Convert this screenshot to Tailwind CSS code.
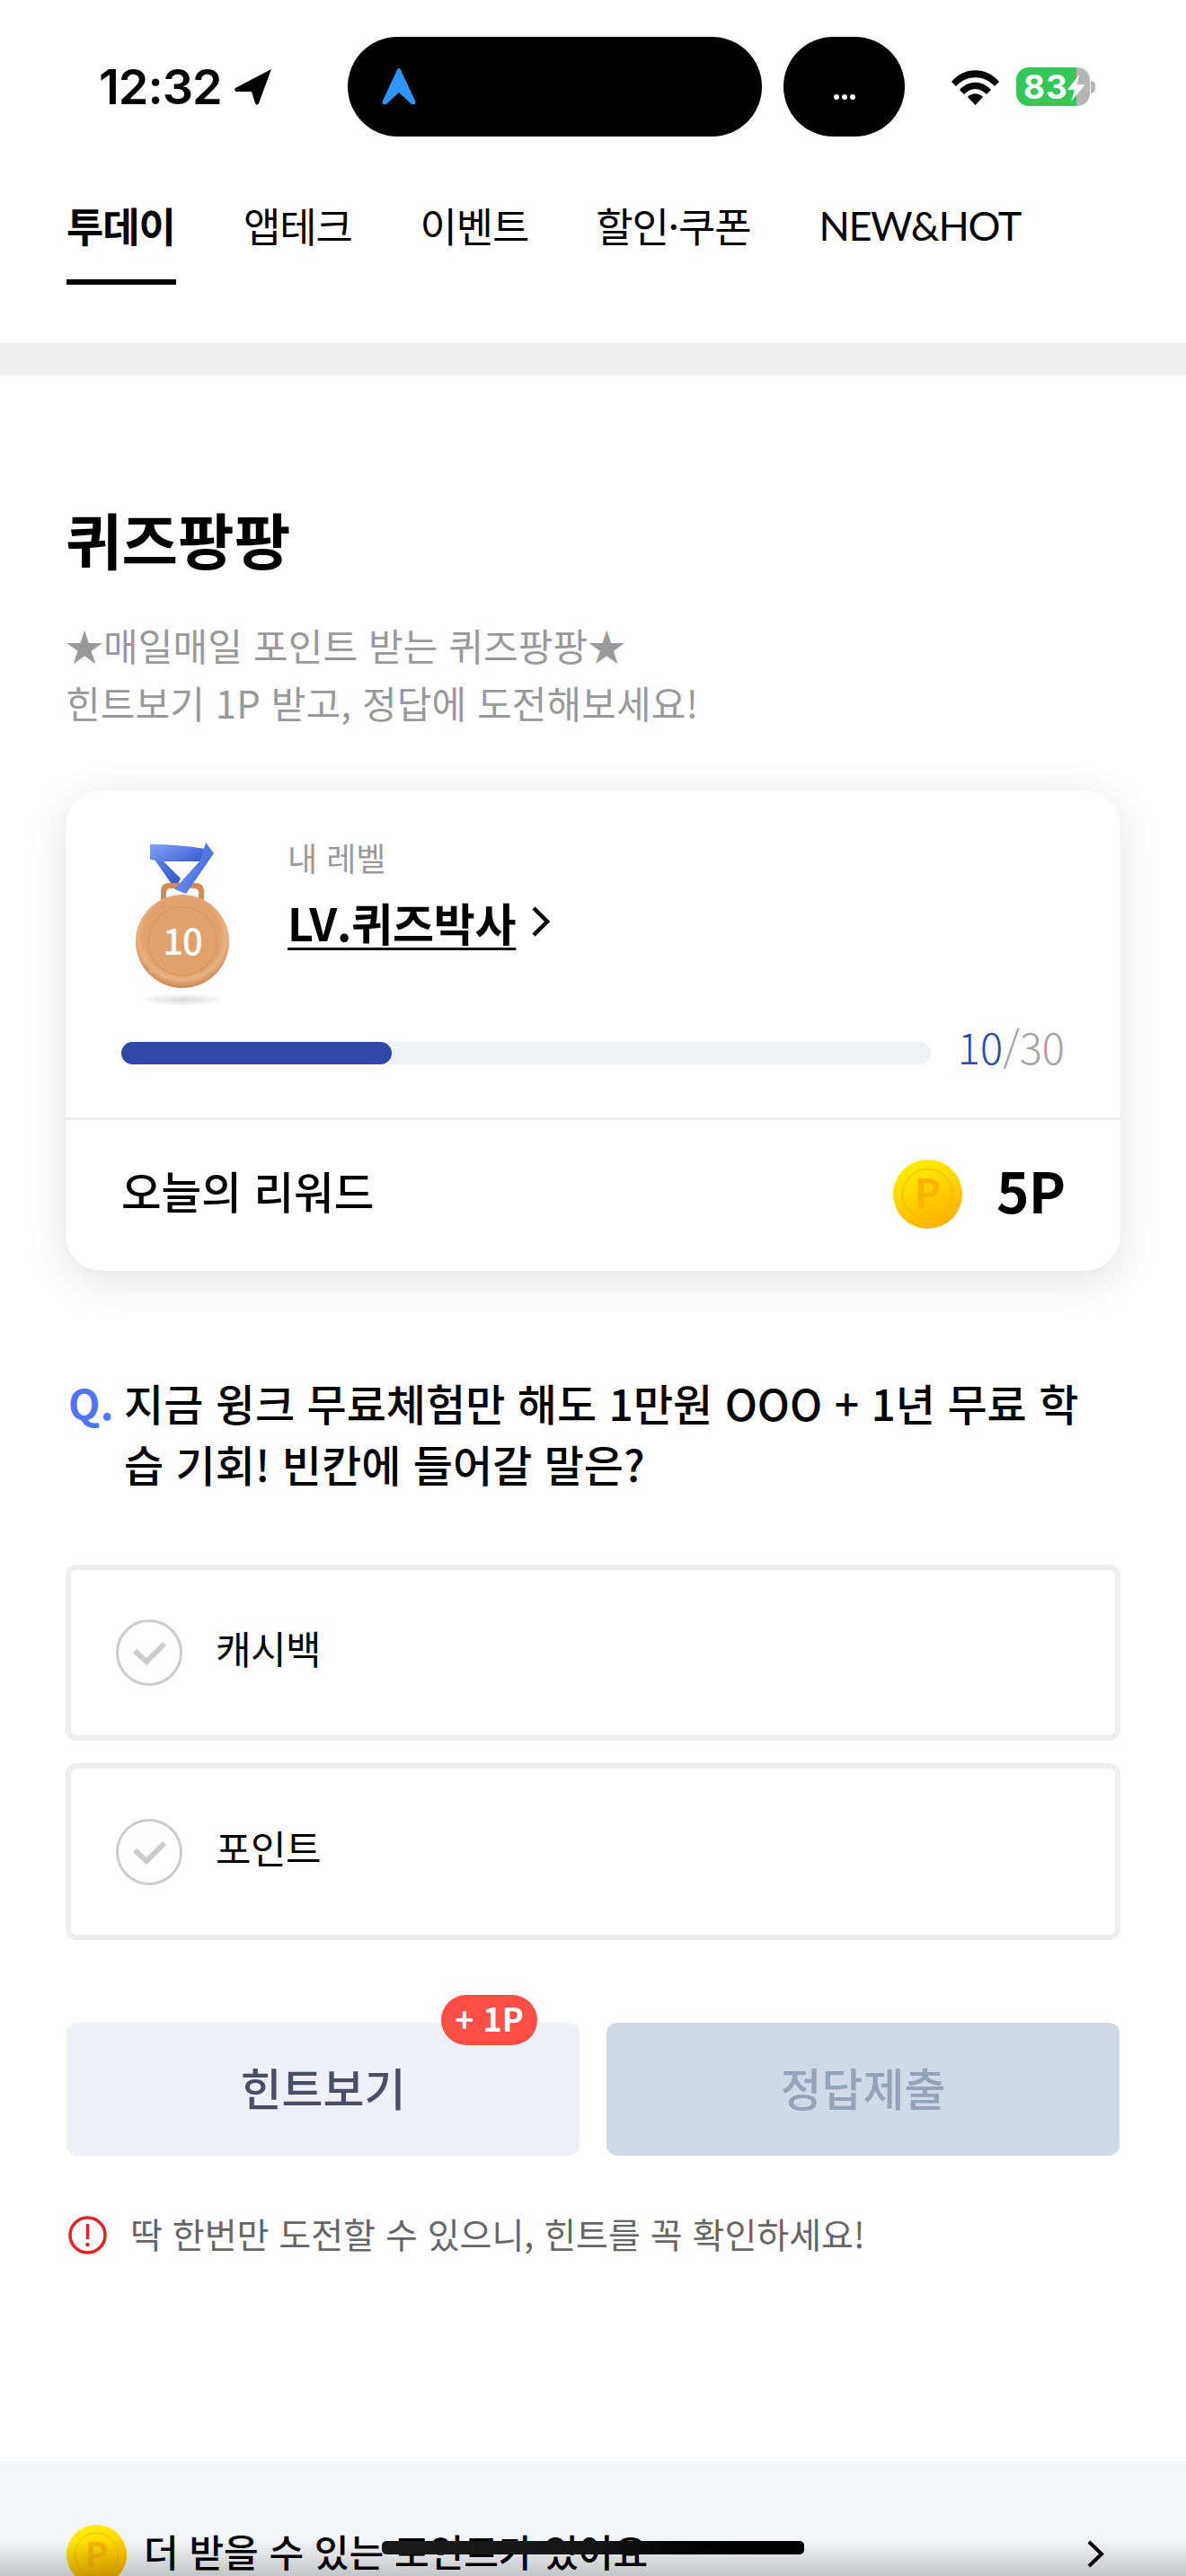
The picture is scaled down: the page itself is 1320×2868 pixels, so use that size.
<!DOCTYPE html>
<html lang="ko">
<head>
  <meta charset="UTF-8" />
  <meta name="viewport" content="width=device-width, initial-scale=1.0" />
  <title>퀴즈팡팡</title>
  <script src="https://cdn.jsdelivr.net/npm/@tailwindcss/browser@4"></script>
</head>
<body class="bg-white font-['Noto_Sans_CJK_KR','Noto_Sans',sans-serif] text-black">
  <div class="relative w-[1320px] h-[2868px] overflow-hidden bg-white">

    <!-- status bar -->
    <div class="flex items-start h-[193px] pt-[41px]">
      <div class="w-[387px] pl-[110px] h-[111px] flex items-center gap-[14px]">
        <span class="font-['Inter',sans-serif] font-semibold text-[54px] leading-none tracking-[-1px]">12:32</span>
        <svg class="w-[42px] h-[40px]" viewBox="0 0 42 40"><path d="M41 0 L1 21 Q-1 24 2 25 L19 25 L23 38 Q25 41 27 38 Z" fill="#000"/></svg>
      </div>
      <div class="w-[461px] h-[111px] rounded-full bg-black flex items-center pl-[38px]">
        <svg class="w-[38px] h-[41px]" viewBox="0 0 38 41"><path d="M19 0 Q21 0 22 4 L37 36 Q39 41 33 40 L19 27 L5 40 Q-1 41 1 36 L16 4 Q17 0 19 0 Z" fill="#2f95ff"/></svg>
      </div>
      <div class="ml-[24px] w-[135px] h-[111px] rounded-full bg-black flex justify-center items-center gap-[3px] pt-[23px]">
        <span class="w-[6px] h-[6px] rounded-full bg-white"></span>
        <span class="w-[6px] h-[6px] rounded-full bg-white"></span>
        <span class="w-[6px] h-[6px] rounded-full bg-white"></span>
      </div>
      <div class="ml-[51px] h-[111px] flex items-center">
        <svg class="w-[55px] h-[40px]" viewBox="0 0 55 40">
          <path d="M1 14 C15 -3 40 -3 54 14 L49 19 C37 6 18 6 6 19 Z" fill="#000"/>
          <path d="M10 23 C20 12 35 12 45 23 L40 28 C32 20 23 20 15 28 Z" fill="#000"/>
          <path d="M19 31 C24 26 31 26 36 31 L27.500 40 Z" fill="#000"/>
        </svg>
        <div class="relative ml-[18px] flex w-[82px] h-[43px] rounded-[14px] overflow-hidden">
          <div class="w-[67px] bg-[#34c759] pl-[8px] text-white font-['Inter',sans-serif] font-bold text-[37px] leading-[43px] tracking-[1px]">83</div>
          <div class="w-[15px] bg-[#b5b5b5]"></div>
          <svg class="absolute left-[57px] top-[8px] w-[20px] h-[30px]" viewBox="0 0 20 30"><path d="M13 0 L0 17 L8 17 L4 30 L20 11 L11 11 Z" fill="#fff"/></svg>
        </div>
        <div class="ml-[1px] w-[5px] h-[14px] rounded-r-full bg-[#b5b5b5]"></div>
      </div>
    </div>

    <!-- tabs -->
    <div class="flex h-[124px] pl-[74px] text-[45px] leading-[64px] tracking-[-1.200px]">
      <div class="w-[122px] h-full border-b-[6px] border-black font-semibold pt-[26px] whitespace-nowrap">투데이</div>
      <div class="ml-[75px] pt-[26px] whitespace-nowrap">앱테크</div>
      <div class="ml-[76px] pt-[26px] whitespace-nowrap">이벤트</div>
      <div class="ml-[75px] pt-[26px] whitespace-nowrap">할인·쿠폰</div>
      <div class="ml-[76px] pt-[26px] whitespace-nowrap font-['Lato',sans-serif] tracking-[-1.300px]">NEW&amp;HOT</div>
    </div>
    <div class="h-[65px]"></div>
    <div class="h-[36px] bg-[#eeeeee]"></div>

    <!-- quiz -->
    <div class="px-[73px] pt-[142px]">
      <h1 class="text-[68px] leading-[80px] font-bold">퀴즈팡팡</h1>
      <p class="mt-[46px] text-[42px] leading-[64px] text-[#999999] tracking-[0.100px]">★매일매일 포인트 받는 퀴즈팡팡★<br />힌트보기 1P 받고, 정답에 도전해보세요!</p>

      <!-- level card -->
      <div class="mt-[66px] h-[535px] rounded-[40px] bg-white shadow-[0_10px_44px_rgba(0,0,0,0.13)]">
        <div class="h-[367px] border-b-[3px] border-[#eeeeee] px-[62px] pt-[58px]">
          <div class="flex h-[202px]">
            <svg class="ml-[2px] w-[130px] h-[182px]" viewBox="0 0 130 182">
              <defs>
                <linearGradient id="rib" x1="0" y1="0" x2="1" y2="0.600"><stop offset="0" stop-color="#84a3f2"/><stop offset="1" stop-color="#3f66da"/></linearGradient>
                <linearGradient id="strap" x1="0" y1="0" x2="1" y2="1"><stop offset="0" stop-color="#5d82e6"/><stop offset="1" stop-color="#2f52bf"/></linearGradient>
                <radialGradient id="bronze" cx="0.500" cy="0.440" r="0.580"><stop offset="0" stop-color="#e3a46d"/><stop offset="0.700" stop-color="#e0a06a"/><stop offset="0.820" stop-color="#e9b283"/><stop offset="1" stop-color="#c07a42"/></radialGradient>
                <radialGradient id="floor"><stop offset="0" stop-color="#000" stop-opacity="0.150"/><stop offset="1" stop-color="#000" stop-opacity="0"/></radialGradient>
              </defs>
              <ellipse cx="66" cy="175" rx="48" ry="7" fill="url(#floor)"/>
              <path d="M35 19 L45 21 L64 40 L58 52 Z" fill="url(#strap)"/>
              <path d="M42 64 L42 54 Q42 45 52 45 L80 45 Q90 45 90 54 L90 64 L84 64 L84 56 Q84 51 78 51 L54 51 Q48 51 48 56 L48 64 Z" fill="#cf8d55"/>
              <path d="M30 2 Q60 2 92 7 L86 21 L45 21 L30 19 Z" fill="url(#rib)"/>
              <path d="M92 0 L101 12 L70 57 L57 52 L86 20 Z" fill="url(#rib)"/>
              <circle cx="66" cy="110" r="52" fill="url(#bronze)"/>
              <circle cx="66" cy="110" r="38" fill="#e1a16a" stroke="#d8985f" stroke-width="1.500"/>
              <text x="66" y="125" text-anchor="middle" font-size="40" font-weight="500" fill="#fff" font-family="Noto Sans CJK KR" letter-spacing="-1">10</text>
            </svg>
            <div class="ml-[53px] -mt-[8px]">
              <div class="text-[36px] leading-[48px] text-[#999999]">내 레벨</div>
              <div class="mt-[18px] flex items-center">
                <span class="text-[50px] leading-[60px] font-semibold underline underline-offset-[7px] decoration-[3px] tracking-[-0.200px]">LV.퀴즈박사</span>
                <svg class="ml-[18px] w-[20px] h-[34px]" viewBox="0 0 20 34"><path d="M2 2 L17 17 L2 32" fill="none" stroke="#000" stroke-width="4.500"/></svg>
              </div>
            </div>
          </div>
          <div class="flex items-start">
            <div class="mt-[20px] w-[903px] h-[25px] rounded-full bg-[#f0f1f3]">
              <div class="w-[301px] h-full rounded-full bg-[#3047a5]"></div>
            </div>
            <div class="ml-[30px] text-[47px] leading-[50px] font-light text-[#a3a3a3]"><span class="text-[#3047a5]">10</span>/30</div>
          </div>
        </div>
        <div class="flex items-center h-[165px] px-[62px]">
          <span class="-mt-[9px] text-[48.500px] font-medium">오늘의 리워드</span>
          <svg class="ml-auto w-[77px] h-[77px]" viewBox="0 0 77 77">
            <defs><linearGradient id="coin" x1="0.300" y1="0" x2="0.700" y2="1"><stop offset="0" stop-color="#fff000"/><stop offset="1" stop-color="#ffb000"/></linearGradient></defs>
            <circle cx="38.500" cy="38.500" r="38.500" fill="url(#coin)"/>
            <circle cx="38.500" cy="38.500" r="28" fill="none" stroke="#f0b400" stroke-width="1"/>
            <text x="38.500" y="54" text-anchor="middle" font-size="44" font-weight="700" fill="#f7b500" font-family="Noto Sans CJK KR">P</text>
          </svg>
          <span class="ml-[38px] -mt-[11px] text-[62px] font-semibold leading-none tracking-[-1px]">5P</span>
        </div>
      </div>

      <!-- question -->
      <div class="mt-[112px] flex text-[48px] leading-[68px] font-medium">
        <span class="w-[65px] shrink-0 pl-[3px] text-[46px] text-[#4f74f5] font-bold">Q.</span>
        <p class="w-[1085px]">지금 윙크 무료체험만 해도 1만원 OOO + 1년 무료 학습 기회! 빈칸에 들어갈 말은?</p>
      </div>

      <!-- options -->
      <div class="mt-[79px] flex flex-col gap-[25px]">
        <div class="h-[196px] rounded-[12px] border-[6px] border-[#eeeeee] pl-[50px] flex items-center">
          <svg class="w-[74px] h-[74px]" viewBox="0 0 74 74"><circle cx="37" cy="37" r="35.500" fill="none" stroke="#cccccc" stroke-width="3"/><path d="M21 35 L34 47 L54 27" fill="none" stroke="#cccccc" stroke-width="6"/></svg>
          <span class="ml-[37px] -mt-[12px] text-[43px] leading-[60px] tracking-[-0.500px]">캐시백</span>
        </div>
        <div class="h-[197px] rounded-[12px] border-[6px] border-[#eeeeee] pl-[50px] flex items-center">
          <svg class="w-[74px] h-[74px]" viewBox="0 0 74 74"><circle cx="37" cy="37" r="35.500" fill="none" stroke="#cccccc" stroke-width="3"/><path d="M21 35 L34 47 L54 27" fill="none" stroke="#cccccc" stroke-width="6"/></svg>
          <span class="ml-[37px] -mt-[12px] text-[43px] leading-[60px] tracking-[-0.500px]">포인트</span>
        </div>
      </div>

      <!-- buttons -->
      <div class="mt-[92px] ml-[1px] flex gap-[30px]">
        <button class="relative w-[571px] h-[148px] pb-[6px] rounded-[12px] bg-[#eef0f6] text-[50px] font-medium text-[#4a4f66]">
          힌트보기
          <span class="absolute left-[417px] -top-[31px] w-[107px] h-[56px] rounded-full bg-[#ff4d47] text-white text-[36px] leading-[50px] font-bold">+ 1P</span>
        </button>
        <button class="w-[571px] h-[148px] pb-[6px] rounded-[12px] bg-[#d0d9e6] text-[50px] font-medium text-[#94a3b8]">정답제출</button>
      </div>

      <!-- notice -->
      <div class="mt-[67px] ml-[3px] flex items-center h-[43px]">
        <svg class="w-[43px] h-[43px]" viewBox="0 0 43 43"><circle cx="21.500" cy="21.500" r="19.500" fill="none" stroke="#e3222a" stroke-width="3.500"/><path d="M21.500 9 L21.500 26" stroke="#e3222a" stroke-width="3.500"/><circle cx="21.500" cy="32" r="2.300" fill="#e3222a"/></svg>
        <span class="ml-[26px] -mt-[4px] text-[39px] leading-none text-[#666666] whitespace-nowrap">딱 한번만 도전할 수 있으니, 힌트를 꼭 확인하세요!</span>
      </div>
    </div>

    <!-- more points -->
    <div class="mt-[230px] h-[128px] bg-[#f4f5f9] pt-[71px] pl-[74px] flex items-start">
      <svg class="w-[67px] h-[67px] shrink-0" viewBox="0 0 77 77">
        <circle cx="38.500" cy="38.500" r="38.500" fill="url(#coin)"/>
        <circle cx="38.500" cy="38.500" r="28" fill="none" stroke="#f0b400" stroke-width="1"/>
        <text x="38.500" y="54" text-anchor="middle" font-size="44" font-weight="700" fill="#f7b500" font-family="Noto Sans CJK KR">P</text>
      </svg>
      <span class="ml-[19px] mt-[4px] text-[42px] leading-[50px] font-medium whitespace-nowrap">더 받을 수 있는 포인트가 있어요</span>
      <svg class="absolute left-[1210px] top-[2828px] w-[20px] h-[31px]" viewBox="0 0 20 31"><path d="M2 2 L16 15.500 L2 29" fill="none" stroke="#000" stroke-width="4"/></svg>
    </div>

    <!-- bottom fade + home indicator -->
    <div class="absolute left-0 right-0 bottom-0 h-[40px] bg-gradient-to-b from-black/0 to-black/20"></div>
    <div class="absolute left-[425px] top-[2829px] w-[470px] h-[15px] rounded-[5px] bg-gradient-to-r from-[#1a1a1a] via-[#161616] to-black"></div>
  </div>
</body>
</html>
